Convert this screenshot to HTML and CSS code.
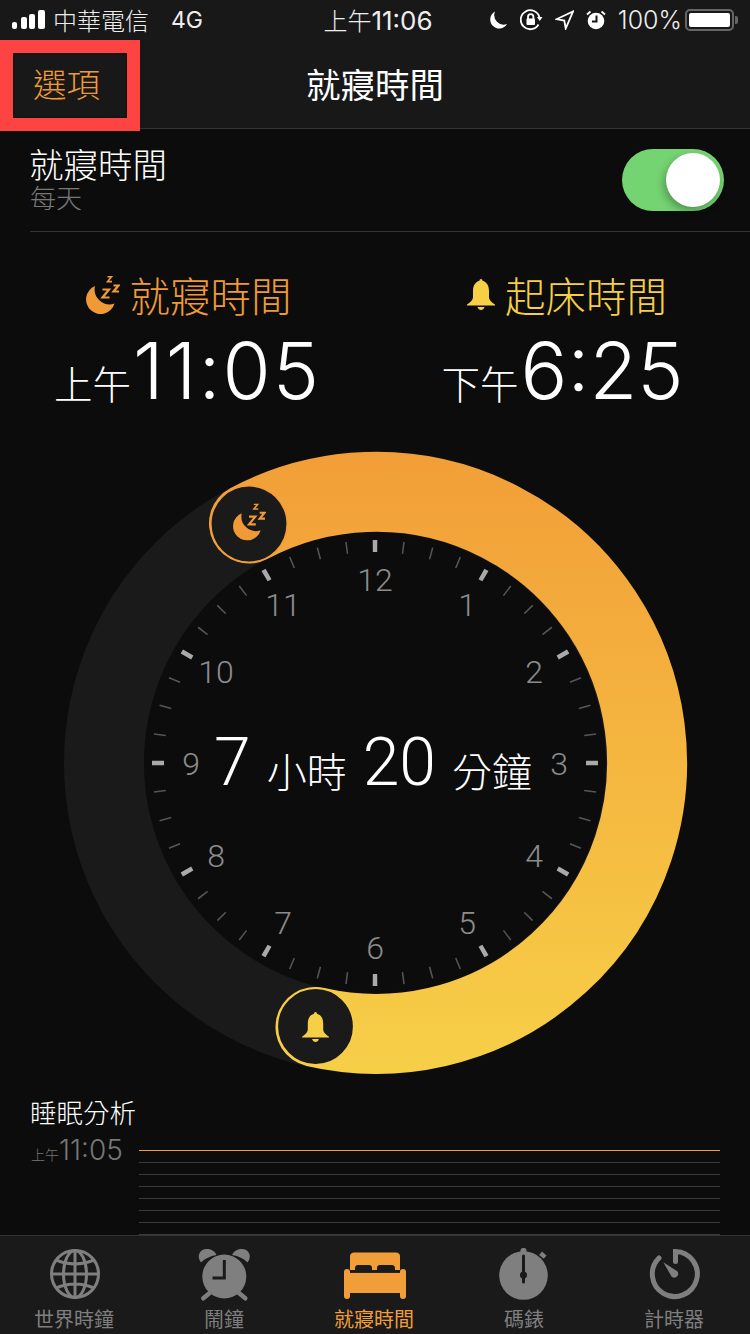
FILE: index.html
```html
<!DOCTYPE html>
<html lang="zh-Hant">
<head>
<meta charset="utf-8">
<title>就寢時間</title>
<link rel="stylesheet" href="styles.css">
</head>
<body>
<svg class="defs" width="0" height="0" aria-hidden="true">
  <defs>
    <symbol id="sleep" viewBox="0 0 34 38">
      <path class="fill" d="M9 10.100A14.500 14.500 0 1 0 28.500 27.500A15 15 0 0 1 9 10.100Z"/>
      <path class="zed" d="M16.5 13.5H23L16.5 21.5H23.5"/>
      <path class="zed" d="M27.5 9.5H32.5L27.5 15.5H33"/>
      <path class="zed thin" d="M21.5 .8H25.5L21.5 5.6H26"/>
    </symbol>
    <symbol id="bell" viewBox="0 0 28 32">
      <path class="fill" d="M14 0C15 0 15.5.8 15.5 1.8C20 3 22 7 22 12V18C22 21 25 23.5 28 25.5V26.5H0V25.5C3 23.5 6 21 6 18V12C6 7 8 3 12.5 1.8C12.5.8 13 0 14 0Z"/>
      <path class="fill" d="M10.5 28H17.5C17 30 15.5 31 14 31S11 30 10.5 28Z"/>
    </symbol>
  </defs>
</svg>

<header class="top">
  <div class="status">
    <div class="status-left">
      <svg class="signal" width="34" height="20" viewBox="0 0 34 20"><rect x="0" y="12" width="5" height="7" rx="2"/><rect x="9" y="7" width="6" height="12" rx="2"/><rect x="17" y="4" width="6" height="15" rx="2"/><rect x="26" y="0" width="7" height="19" rx="2"/></svg>
      <span>中華電信</span>
      <span class="net">4G</span>
    </div>
    <div class="status-time">上午<span class="latin">11:06</span></div>
    <div class="status-right">
      <svg class="st-icon" width="19" height="20" viewBox="0 0 19 20"><path class="white" d="M6 1.5A9 9 0 1 0 18 14A9.5 9.5 0 0 1 6 1.5Z"/></svg>
      <svg class="st-icon" width="23" height="22" viewBox="0 0 23 22"><path class="line" d="M18.5 15.5A9.5 9.5 0 1 1 19.5 8.5"/><path class="white" d="M17 8H22.5L19.7 12Z"/><rect class="white" x="6.5" y="9.5" width="8.5" height="6.5" rx="1"/><path class="line" d="M8 10V7.8A2.6 2.6 0 0 1 13.4 7.8V10"/></svg>
      <svg class="st-icon" width="19" height="20" viewBox="0 0 19 20"><path class="line" d="M1.5 9.2L18 1.5L10.7 18.5L9.3 10.6Z"/></svg>
      <svg class="st-icon" width="20" height="20" viewBox="0 0 20 20"><circle class="white" cx="10" cy="11" r="8.3"/><path class="hand" d="M10.5 5.5V11.5H6"/><path class="line" d="M1 4.5L4.5 1.5M19 4.5L15.5 1.5"/></svg>
      <span class="latin pct">100%</span>
      <div class="battery"><div class="battery-fill"></div></div>
      <div class="battery-nub"></div>
    </div>
  </div>
  <nav class="nav">
    <span class="nav-option">選項</span>
    <span class="nav-title">就寢時間</span>
    <div class="highlight"></div>
  </nav>
</header>

<main class="main">
  <section class="toggle-row">
    <div>
      <div class="toggle-title">就寢時間</div>
      <div class="toggle-sub">每天</div>
    </div>
    <div class="switch"><div class="knob"></div></div>
  </section>

  <section class="times">
    <div class="time-col">
      <div class="time-label bed"><svg class="ic-sleep" width="34" height="38"><use href="#sleep"/></svg>就寢時間</div>
      <div class="time-value"><span class="ampm">上午</span><span class="digits spaced">11:05</span></div>
    </div>
    <div class="time-col">
      <div class="time-label wake"><svg class="ic-bell" width="28" height="32"><use href="#bell"/></svg>起床時間</div>
      <div class="time-value"><span class="ampm">下午</span><span class="digits">6:25</span></div>
    </div>
  </section>

  <section class="dial">
    <svg class="dial-svg" width="622" height="622" viewBox="-311 -311 622 622">
      <defs>
        <linearGradient id="arc" gradientUnits="userSpaceOnUse" x1="0" y1="-311" x2="0" y2="311">
          <stop offset="0" stop-color="#f29e38"/>
          <stop offset="1" stop-color="#f7cf47"/>
        </linearGradient>
      </defs>
      <circle class="track" r="271"/>
      <path class="arc" d="M-126 -239.500A271 271 0 1 1 -59.500 264"/>
      <circle class="ticks-minor" r="217" pathLength="480" stroke-dasharray="0.55 9.45" stroke-dashoffset="0.275"/>
      <circle class="ticks-hour" r="217" pathLength="120" stroke-dasharray="0.4 9.6" stroke-dashoffset="0.2"/>
      <g class="nums">
        <text x="0" y="-183">12</text><text x="92" y="-158">1</text><text x="159" y="-91">2</text>
        <text x="184" y="1">3</text><text x="159" y="93">4</text><text x="92" y="160">5</text>
        <text x="0" y="185">6</text><text x="-92" y="160">7</text><text x="-159" y="93">8</text>
        <text x="-184" y="1">9</text><text x="-159" y="-91">10</text><text x="-92" y="-158">11</text>
      </g>
      <circle class="knob-bed" cx="-126" cy="-239" r="38.200"/>
      <circle class="knob-wake" cx="-59.500" cy="263.500" r="38.200"/>
      <svg class="dial-ic-sleep" x="-142" y="-260" width="33" height="38" viewBox="0 0 34 38"><use href="#sleep"/></svg>
      <svg class="dial-ic-bell" x="-73" y="249" width="27" height="31" viewBox="0 0 28 32"><use href="#bell"/></svg>
    </svg>
    <div class="duration">
      <span class="big">7</span><span class="unit">小時</span><span class="big">20</span><span class="unit">分鐘</span>
    </div>
  </section>

  <section class="sleep">
    <h2 class="sleep-title">睡眠分析</h2>
    <div class="sleep-row">
      <div class="sleep-time"><span class="sleep-ampm">上午</span>11:05</div>
      <div class="sleep-lines">
        <div class="gl on"></div><div class="gl"></div><div class="gl"></div><div class="gl"></div>
        <div class="gl"></div><div class="gl"></div><div class="gl"></div><div class="gl"></div>
      </div>
    </div>
  </section>
</main>

<footer class="tabs">
  <div class="tab">
    <svg class="tab-ic" width="62" height="56" viewBox="0 0 62 56"><g class="tline"><circle cx="31" cy="28" r="23.500"/><ellipse cx="31" cy="28" rx="11.500" ry="23.500"/><path d="M31 4.500V51.500M7.500 28H54.500M12 14C24 19 38 19 50 14M12 42C24 37 38 37 50 42"/></g></svg>
    <span class="tab-label">世界時鐘</span>
  </div>
  <div class="tab">
    <svg class="tab-ic" width="62" height="56" viewBox="0 0 62 56"><g class="tfill"><circle cx="30.300" cy="30.500" r="22"/><path d="M7 16.500C2.500 11 5 3 13 3C17.500 3 21 5.500 22.500 9C16 10 11 12.500 7 16.500Z"/><path d="M53.600 16.500C58.100 11 55.600 3 47.600 3C43.100 3 39.600 5.500 38.100 9C44.600 10 49.600 12.500 53.600 16.500Z"/></g><path class="tstroke" d="M9.300 52.300L16 46.700M51.300 52.300L44.600 46.700"/><path class="thand" d="M30.300 14V32H18.500"/></svg>
    <span class="tab-label">鬧鐘</span>
  </div>
  <div class="tab active">
    <svg class="tab-ic" width="62" height="56" viewBox="0 0 62 56"><g class="tfill-a"><rect x="0" y="23" width="6" height="30" rx="3"/><rect x="56" y="23" width="6" height="30" rx="3"/><path d="M6 24V10C6 8 8 6.500 10 6.500H52C54 6.500 56 8 56 10V24Z"/><rect x="6" y="26.700" width="50" height="20.300"/></g><path class="bedcut" d="M6 24H11V22C11 20 12.500 19 14 19H25C27 19 28 20 28 22V24H33V22C33 20 34 19 36 19H48C49.500 19 51 20 51 22V24H56V26.700H6Z"/></svg>
    <span class="tab-label">就寢時間</span>
  </div>
  <div class="tab">
    <svg class="tab-ic" width="62" height="56" viewBox="0 0 62 56"><g class="tfill"><circle cx="29.500" cy="29.500" r="24.300"/><rect x="26.500" y="2" width="6" height="6" rx="2.500"/><rect x="46" y="7" width="6" height="4.500" transform="rotate(40 49 9)"/></g><path class="thand2" d="M29.500 10V36"/><circle class="hub" cx="29.500" cy="29" r="3.500"/></svg>
    <span class="tab-label">碼錶</span>
  </div>
  <div class="tab">
    <svg class="tab-ic" width="62" height="56" viewBox="0 0 62 56"><path class="tring" d="M31.500 15.500V5.500A22.500 22.500 0 1 1 15 12"/><path class="tfill" d="M19.300 16.300L33.300 25.200A4 4 0 0 1 27.700 30.800Z"/></svg>
    <span class="tab-label">計時器</span>
  </div>
</footer>
</body>
</html>
```
FILE: styles.css
```css
* { box-sizing: border-box; }
html, body { margin: 0; padding: 0; }
body {
  width: 750px;
  height: 1334px;
  overflow: hidden;
  display: flex;
  flex-direction: column;
  background: #0c0c0c;
  color: #fff;
  font-family: "Noto Sans CJK TC", "Liberation Sans", sans-serif;
  font-weight: 400;
}
.defs { position: absolute; }
.fill { fill: currentColor; }
.zed { fill: none; stroke: currentColor; stroke-width: 2.2; }
.zed.thin { stroke-width: 1.6; }
.latin { font-family: Inter, "Liberation Sans", sans-serif; font-weight: 400; }

.top { background: #181818; }
.status {
  height: 40px;
  display: grid;
  grid-template-columns: 1fr auto 1fr;
  align-items: center;
  font-size: 24px;
  line-height: 38px;
  color: #eee;
}
.status-left { display: flex; align-items: center; padding-left: 12px; font-weight: 300; }
.signal { fill: #fff; margin-right: 7px; }
.net { font-family: Inter, sans-serif; margin-left: 22px; font-size: 23px; font-weight: 400; }
.status-time { padding-left: 6px; font-weight: 300; }
.status-time .latin { font-size: 26px; }
.status-right { display: flex; align-items: center; justify-content: flex-end; padding-right: 12px; }
.st-icon { margin-right: 12px; flex: none; }
.white { fill: #fff; }
.line { fill: none; stroke: #fff; stroke-width: 1.8; }
.hand { fill: none; stroke: #181818; stroke-width: 2; }
.pct { font-size: 25px; margin-right: 3px; font-weight: 300; }
.battery { width: 49px; height: 22px; border: 2px solid #666; border-radius: 5px; padding: 2px; }
.battery-fill { width: 100%; height: 100%; background: #fff; border-radius: 2px; }
.battery-nub { width: 3px; height: 8px; background: #666; border-radius: 0 2px 2px 0; margin-left: 1px; }

.nav {
  position: relative;
  height: 89px;
  display: flex;
  align-items: center;
  justify-content: center;
  border-bottom: 1px solid #333;
  padding-bottom: 3px;
}
.nav-option { position: absolute; left: 33px; font-size: 33.500px; color: #ef9a36; font-weight: 300; }
.nav-title { font-size: 34.500px; font-weight: 400; }
.highlight {
  position: absolute;
  left: 0;
  top: 0;
  width: 140px;
  height: 91px;
  border: 13px solid #fe4343;
  box-shadow: inset 0 0 3px rgba(0,0,0,.5);
}

.main { flex: 1; min-height: 0; overflow: hidden; }
.toggle-row {
  height: 103px;
  margin-left: 30px;
  padding: 11px 26px 0 0;
  border-bottom: 1px solid #333;
  display: flex;
  justify-content: space-between;
  align-items: flex-start;
}
.toggle-title { font-size: 34.500px; line-height: 46px; font-weight: 300; margin-left: -1px; }
.toggle-sub { font-size: 26px; line-height: 22px; color: #777; font-weight: 300; }
.switch {
  position: relative;
  width: 102px;
  height: 62px;
  margin-top: 9px;
  border-radius: 31px;
  background: #75d472;
}
.knob {
  position: absolute;
  right: 4px;
  top: 4px;
  width: 54px;
  height: 54px;
  border-radius: 50%;
  background: #fff;
  box-shadow: -2px 4px 8px rgba(0,0,0,.3);
}

.times { height: 220px; display: grid; grid-template-columns: 1fr 1fr; padding-top: 33px; }
.time-col { display: flex; flex-direction: column; align-items: center; }
.time-label { display: flex; align-items: center; font-size: 40.500px; line-height: 60px; font-weight: 300; }
.bed { color: #ef9a36; padding-left: 2px; }
.wake { color: #f7cf47; padding-left: 9px; }
.ic-sleep { margin-right: 10px; }
.ic-bell { margin-right: 10px; }
.time-value { display: flex; align-items: baseline; height: 84px; line-height: 84px; margin-top: 4px; }
.ampm { font-size: 38.500px; font-weight: 300; }
.digits { font-family: Inter, "Liberation Sans", sans-serif; font-weight: 300; font-size: 78px; margin-left: 2px; }
.digits.spaced { letter-spacing: 2px; }

.dial { position: relative; width: 622px; height: 622px; margin: 0 auto; color: #ef9a36; }
.dial-svg { display: block; overflow: visible; }
.track { fill: none; stroke: #1a1a1a; stroke-width: 80; }
.arc { fill: none; stroke: url(#arc); stroke-width: 80; stroke-linecap: round; }
.ticks-minor { fill: none; stroke: #555; stroke-width: 12; }
.ticks-hour { fill: none; stroke: #aaa; stroke-width: 12; }
.nums text { font-family: Roboto, sans-serif; font-weight: 300; font-size: 32px; fill: #8c8c8c; text-anchor: middle; dominant-baseline: central; }
.knob-bed { fill: #1a1a1a; stroke: #f29e38; stroke-width: 1.6; }
.knob-wake { fill: #1a1a1a; stroke: #f7cf47; stroke-width: 1.6; }
.dial-ic-sleep { color: #ef9a36; }
.dial-ic-bell { color: #f7cf47; }
.duration {
  position: absolute;
  inset: 0;
  display: flex;
  align-items: center;
  justify-content: center;
  color: #fff;
  gap: 16px;
  padding-right: 4px;
}
.big { font-family: Roboto, sans-serif; font-weight: 300; font-size: 66px; line-height: 1; }
.unit { font-size: 40px; line-height: 1; padding-top: 14px; font-weight: 300; }

.sleep { padding: 21px 30px 0 30px; }
.sleep-title { margin: 0; font-size: 26.500px; font-weight: 300; line-height: 34px; }
.sleep-row { display: flex; justify-content: space-between; }
.sleep-time { width: 108px; margin: 4px 0 0 1px; font-family: Inter, sans-serif; font-size: 28px; font-weight: 300; color: #777; line-height: 34px; white-space: nowrap; }
.sleep-ampm { font-family: "Noto Sans CJK TC", sans-serif; font-size: 14px; }
.sleep-lines { width: 581px; display: flex; flex-direction: column; gap: 11px; padding-top: 21px; }
.gl { height: 1px; background: #3a3a3a; }
.gl.on { background: #f29e38; }

.tabs { height: 99px; flex: none; display: grid; grid-template-columns: repeat(5, 150px); background: #1a1a1a; border-top: 1px solid #333; }
.tab { display: flex; flex-direction: column; align-items: center; color: #7f7f7f; padding-top: 10px; }
.tab.active { color: #f29e38; }
.tab-ic { display: block; flex: none; }
.tab-label { font-size: 20px; line-height: 30px; font-weight: 400; margin: 2px 2px 0 0; }
.tline { fill: none; stroke: #7f7f7f; stroke-width: 3; }
.tfill { fill: #7f7f7f; }
.tfill-a { fill: #f29e38; }
.bedcut { fill: #1a1a1a; }
.tstroke { fill: none; stroke: #7f7f7f; stroke-width: 4.500; stroke-linecap: round; }
.thand { fill: none; stroke: #1a1a1a; stroke-width: 3; }
.thand2 { fill: none; stroke: #1a1a1a; stroke-width: 3; stroke-linecap: round; }
.hub { fill: #1a1a1a; }
.tring { fill: none; stroke: #7f7f7f; stroke-width: 5; stroke-linecap: round; }
```
